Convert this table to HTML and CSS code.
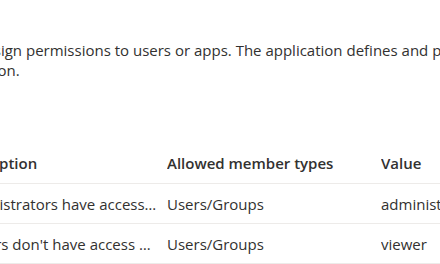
FILE: index.html
```html
<!DOCTYPE html>
<html lang="en">
<head>
    <meta charset="UTF-8">
    <title>App roles</title>
    <link rel="stylesheet" href="styles.css">
</head>
<body>
    <main class="blade">
        <p class="intro">App roles are custom roles to assign permissions to users or apps. The application defines and publishes the app roles and interprets them as permissions during<br>authorization.</p>
        <table class="roles">
            <colgroup>
                <col class="col-desc">
                <col class="col-types">
                <col class="col-value">
                <col class="col-id">
            </colgroup>
            <thead>
                <tr>
                    <th>Description</th>
                    <th>Allowed member types</th>
                    <th>Value</th>
                    <th>ID</th>
                </tr>
            </thead>
            <tbody>
                <tr>
                    <td class="desc">Administrators have access to all settings and data</td>
                    <td>Users/Groups</td>
                    <td>administrator</td>
                    <td>3f1c9a2e-7b4d-4e8a-9c61-2d5f8b0e1a47</td>
                </tr>
                <tr>
                    <td class="desc">Viewers don't have access — read only</td>
                    <td>Users/Groups</td>
                    <td>viewer</td>
                    <td>8a6e2d10-4c3b-4f9e-b7a2-5e1d0c9f3b68</td>
                </tr>
            </tbody>
        </table>
    </main>
</body>
</html>
```

FILE: styles.css
```css
html, body {
    margin: 0;
    overflow: hidden;
    background: #ffffff;
    color: #323130;
    font-family: 'Open Sans', 'Liberation Sans', sans-serif;
    font-size: 15px;
}
.blade {
    margin-left: -42px;
    padding-top: 40px;
    width: 900px;
}
.intro {
    margin: 0 0 0 -36px;
    line-height: 20px;
    text-indent: -153px;
    white-space: nowrap;
}
.roles {
    width: 885px;
    margin: 63px 0 0 -4px;
    border-collapse: collapse;
    table-layout: fixed;
}
.roles th,
.roles td {
    padding: 0 12px 0 0;
    text-align: left;
    white-space: nowrap;
    overflow: hidden;
    text-overflow: ellipsis;
    border-bottom: 1px solid #edebe9;
}
.roles td.desc {
    padding-right: 7px;
}
.roles th {
    height: 40px;
    font-weight: 600;
    vertical-align: middle;
}
.roles td {
    height: 39px;
}
.col-desc { width: 213px; }
.col-types { width: 214px; }
.col-value { width: 158px; }
.col-id { width: 300px; }
```
